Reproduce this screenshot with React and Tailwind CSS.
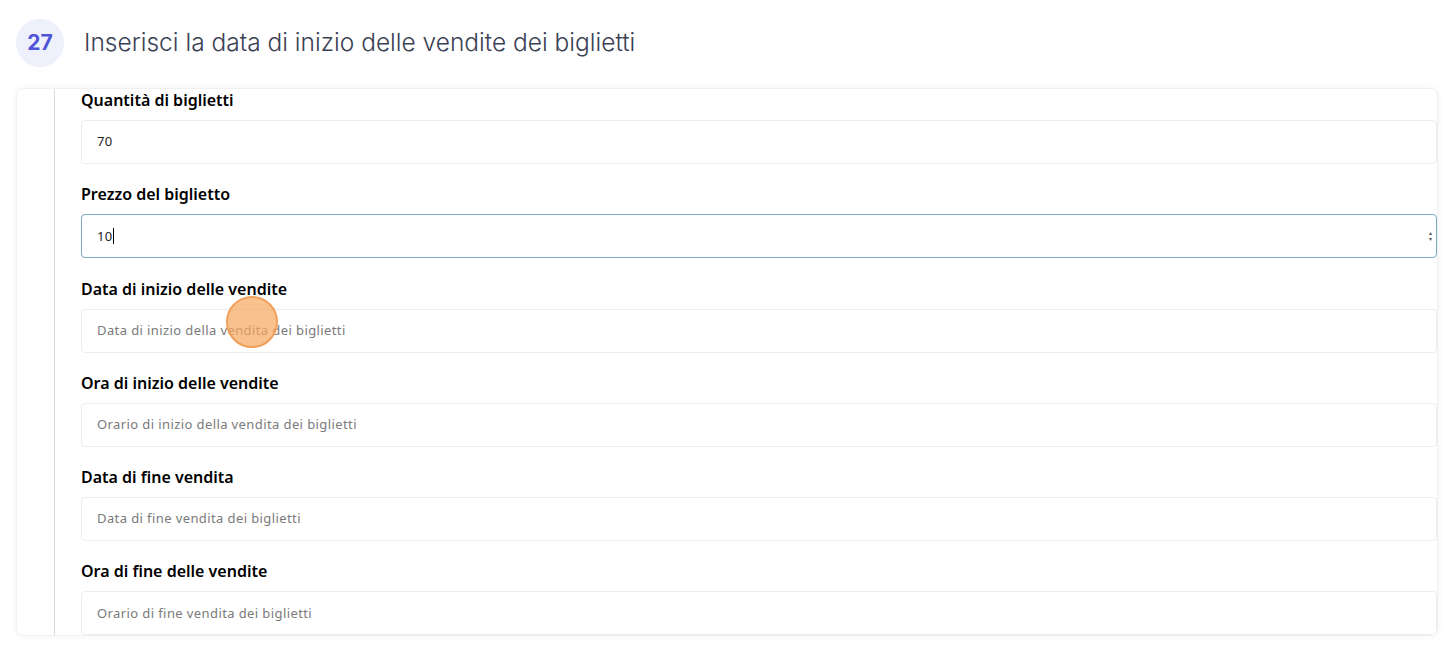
import React from "react";

const fields = [
  { label: "Quantità di biglietti", value: "70" },
  { label: "Prezzo del biglietto", value: "10", focused: true },
  { label: "Data di inizio delle vendite", placeholder: "Data di inizio della vendita dei biglietti" },
  { label: "Ora di inizio delle vendite", placeholder: "Orario di inizio della vendita dei biglietti" },
  { label: "Data di fine vendita", placeholder: "Data di fine vendita dei biglietti" },
  { label: "Ora di fine delle vendite", placeholder: "Orario di fine vendita dei biglietti" },
];

const Field = ({ field }) => {
  return (
    <div className="flex flex-col">
      <div className="h-[20px] flex items-center text-[16px] font-semibold text-black leading-none">
        {field.label}
      </div>
      <div
        className={`mt-[10px] h-[44px] flex items-center pl-[15px] pr-1 rounded-[4px] bg-white border ${
          field.focused ? "border-[#79aac4]" : "border-[#ececec]"
        }`}
      >
        {field.value ? (
          <span className="text-[13px] text-[#222] flex items-center tracking-[0.3px]">
            {field.value}
            {field.focused && <span className="inline-block w-px h-[16px] bg-black ml-px" />}
          </span>
        ) : (
          <span className="text-[13px] text-[#7a7a7a] tracking-[0.4px]">{field.placeholder}</span>
        )}
        {field.focused && (
          <span className="ml-auto flex flex-col text-[6px] leading-[6px] text-[#555]">
            <span>▴</span>
            <span>▾</span>
          </span>
        )}
      </div>
    </div>
  );
};

const App = () => {
  return (
    <div
      className="w-[1454px] h-[646px] bg-white overflow-hidden relative"
      style={{ fontFamily: "'Noto Sans', 'Open Sans', sans-serif" }}
    >
      {/* HEADER */}
      <div className="flex items-center h-[84px] pl-[16px] pt-[1px]">
        <div className="w-[48px] h-[48px] rounded-full bg-[#eef0fb] flex items-center justify-center">
          <span className="text-[21px] font-bold text-[#4f55d6]" style={{ fontFamily: "Inter, sans-serif" }}>
            27
          </span>
        </div>
        <h1
          className="ml-[20px] text-[24.5px] text-[#3b4154] font-light"
          style={{ fontFamily: "Inter, sans-serif" }}
        >
          Inserisci la data di inizio delle vendite dei biglietti
        </h1>
      </div>

      {/* CARD */}
      <div className="mt-[4px] ml-[16px] w-[1422px] h-[548px] rounded-[8px] border border-[#f0f0f0] shadow-[0_0_6px_rgba(0,0,0,0.06)] overflow-hidden flex">
        <div className="w-[37px] shrink-0" />
        <div className="w-px bg-[#dcdcdc] shrink-0" />
        <div className="flex-1 pl-[26px] pt-[1px] flex flex-col gap-[20.3px]">
          {fields.map((f) => (
            <Field key={f.label} field={f} />
          ))}
        </div>
      </div>

      {/* click marker */}
      <div className="absolute left-[226px] top-[296px] w-[52px] h-[52px] rounded-full bg-[#f6a75e]/70 border-2 border-[#f0a05a]" />
    </div>
  );
};

export default App;
